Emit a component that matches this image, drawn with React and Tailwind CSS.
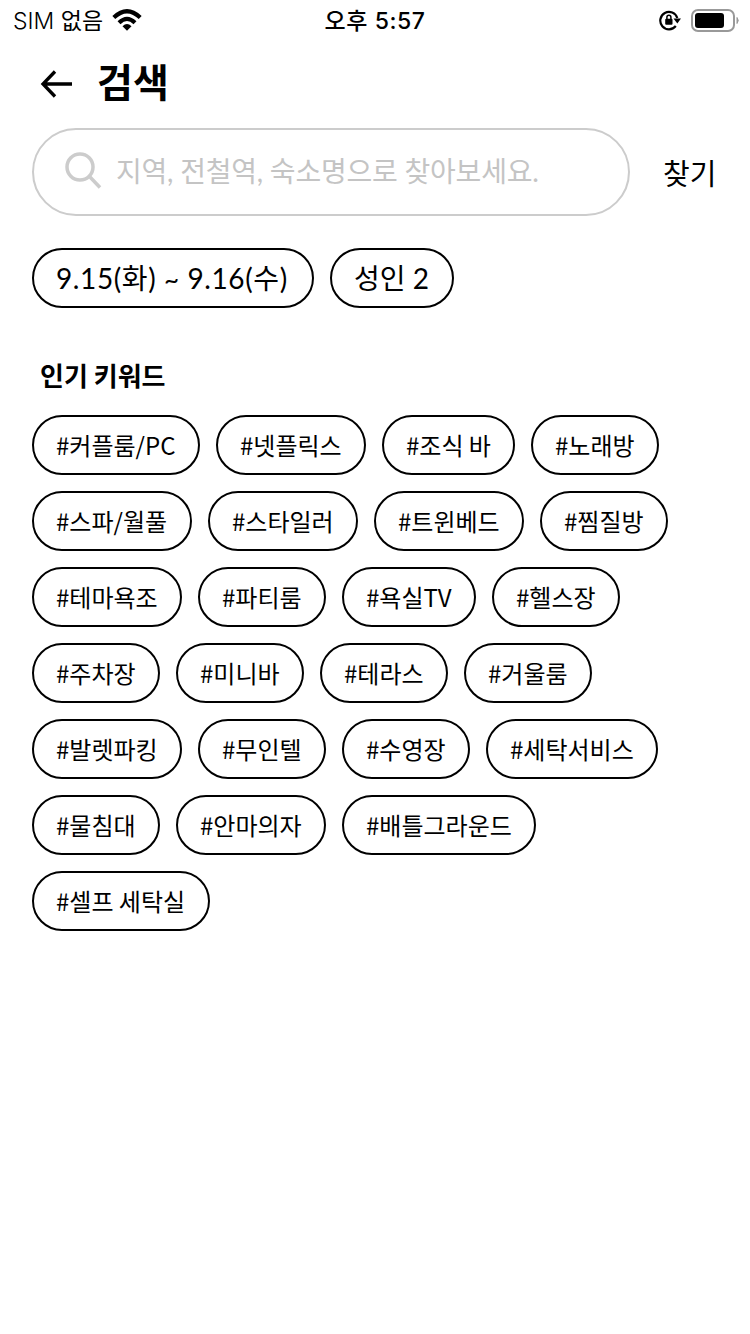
const rows = [
  [['#커플룸/PC', 'w-[168px]'], ['#넷플릭스', 'w-[150px]'], ['#조식 바', 'w-[133px]'], ['#노래방', 'w-[128px]']],
  [['#스파/월풀', 'w-[160px]'], ['#스타일러', 'w-[150px]'], ['#트윈베드', 'w-[150px]'], ['#찜질방', 'w-[128px]']],
  [['#테마욕조', 'w-[150px]'], ['#파티룸', 'w-[128px]'], ['#욕실TV', 'w-[134px]'], ['#헬스장', 'w-[128px]']],
  [['#주차장', 'w-[128px]'], ['#미니바', 'w-[128px]'], ['#테라스', 'w-[128px]'], ['#거울룸', 'w-[128px]']],
  [['#발렛파킹', 'w-[150px]'], ['#무인텔', 'w-[128px]'], ['#수영장', 'w-[128px]'], ['#세탁서비스', 'w-[172px]']],
  [['#물침대', 'w-[128px]'], ['#안마의자', 'w-[150px]'], ['#배틀그라운드', 'w-[194px]']],
  [['#셀프 세탁실', 'w-[178px]']],
];

function Pill({ children, className }) {
  return (
    <button className={`flex h-[60px] shrink-0 items-center whitespace-nowrap rounded-full border-2 border-black pl-[22px] ${className}`}>
      {children}
    </button>
  );
}

function StatusBar() {
  return (
    <div className="flex h-10 items-center justify-between pl-[13px] pr-[11px] font-['Inter','Noto_Sans_CJK_KR',sans-serif]">
      <div className="flex w-[299px] items-center gap-2">
        <span className="pt-0.5 text-[23px] leading-[38px]"><span className="font-[350]">SIM </span>없음</span>
        <svg width="32" height="22" viewBox="0 0 32 22" fill="none" stroke="#000" strokeWidth="4.200">
          <path d="M2.800 8.500Q16-4 29.200 8.500M8 13.700Q16 6 24 13.700" />
          <path d="M11.500 17.200Q16 12.800 20.500 17.200L16 21.700Z" fill="#000" stroke="none" />
        </svg>
      </div>
      <span className="pt-0.5 text-[23px] font-medium leading-[38px] tracking-[0.6px]">오후 5:57</span>
      <div className="flex w-[301px] items-center justify-end gap-2.5">
        <svg width="22" height="22" viewBox="0 0 22 22" fill="none" stroke="#000" strokeWidth="2.200">
          <path d="M16.800 17A8.700 8.700 0 1 1 18.300 9" />
          <path d="M14.500 9.500H22L18.300 14.500Z" fill="#000" stroke="none" />
          <rect x="6.200" y="9.700" width="7.300" height="6" rx="1" fill="#000" stroke="none" />
          <path d="M7.900 10V8.300a2 2 0 0 1 4 0V10" strokeWidth="1.500" />
        </svg>
        <svg width="48" height="23" viewBox="0 0 48 23">
          <rect x="1" y="1" width="42" height="21" rx="6" fill="none" stroke="#999" strokeWidth="2" />
          <rect x="4" y="4" width="29" height="15" rx="3" />
          <path d="M46 8.500q2.500 3 0 6z" fill="#999" stroke="#999" />
        </svg>
      </div>
    </div>
  );
}

export default function App() {
  return (
    <div className="flex h-[1334px] w-[750px] flex-col overflow-hidden bg-white font-['Noto_Sans_CJK_KR',sans-serif] text-black">
      <StatusBar />
      <header className="flex h-[88px] items-center gap-6 pl-10">
        <svg width="33" height="28" viewBox="0 0 33 28" fill="none" stroke="#000" strokeWidth="3.300">
          <path d="M15 1.500L3 14L15 26.500M2.500 14H32" />
        </svg>
        <h1 className="pb-2 text-[39px] font-bold leading-[80px]">검색</h1>
      </header>
      <div className="flex items-center pl-8">
        <div className="flex h-[88px] w-[598px] items-center gap-3.5 rounded-full border-2 border-[#ccc] pl-[31px]">
          <svg className="mb-1" width="37" height="37" viewBox="0 0 37 37" fill="none" stroke="#ccc" strokeWidth="3.500">
            <circle cx="15" cy="15" r="13" />
            <path d="M24.500 24.500L35 35.500" />
          </svg>
          <span className="pb-0.5 font-['Lato','Noto_Sans_CJK_KR',sans-serif] text-[28px] leading-10 tracking-[-0.22px] text-[#c4c4c4]">지역, 전철역, 숙소명으로 찾아보세요.</span>
        </div>
        <button className="ml-[33px] text-[29px] leading-10">찾기</button>
      </div>
      <div className="mt-8 flex gap-4 pl-8 font-['Lato','Noto_Sans_CJK_KR',sans-serif] text-[28px]">
        <Pill className="w-[282px] tracking-[0.600px]"><span className="whitespace-pre">9.15(화) <span className="text-[26px]">~</span> 9.16(수)</span></Pill>
        <Pill className="w-[124px]">성인 2</Pill>
      </div>
      <h2 className="mt-12 h-[59px] pl-10 text-[26px] font-bold leading-[38px]">인기 키워드</h2>
      <div className="flex flex-col gap-4 pl-8 text-[24px]">
        {rows.map((row, i) => (
          <div key={i} className="flex gap-4">
            {row.map(([label, width]) => (
              <Pill key={label} className={width}>{label}</Pill>
            ))}
          </div>
        ))}
      </div>
    </div>
  );
}
